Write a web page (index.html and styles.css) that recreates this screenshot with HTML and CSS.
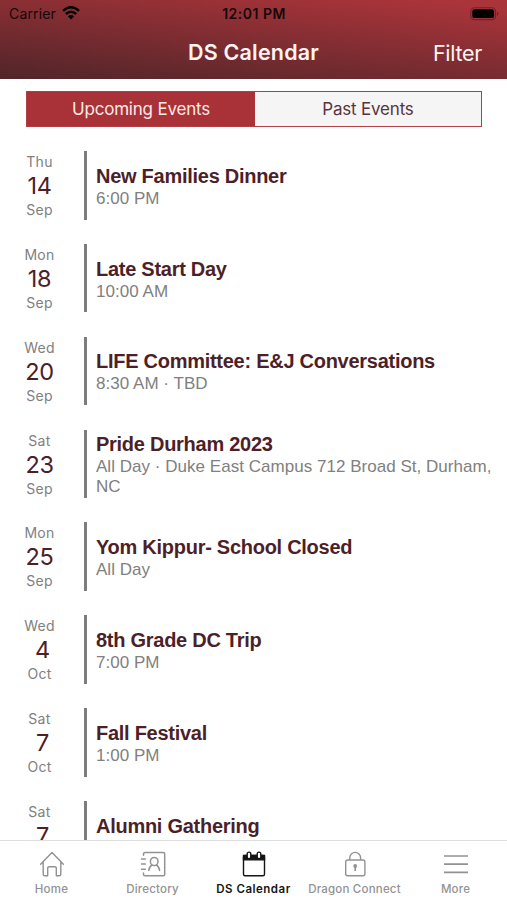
FILE: index.html
```html
<!DOCTYPE html>
<html lang="en">
<head>
<meta charset="utf-8">
<title>DS Calendar</title>
<link rel="stylesheet" href="styles.css">
</head>
<body>
<div class="app">
  <header class="header">
    <div class="status">
      <div class="carrier"><span>Carrier</span>
        <svg width="18" height="14" viewBox="0 0 18 14" fill="none" stroke="#000" stroke-width="2.4"><path d="M1 4.9Q9-2.3 17 4.9M3.8 8Q9 3.6 14.2 8"/><path d="M9 13.4 5.9 10.3Q9 7.8 12.1 10.3Z" fill="#000" stroke="none"/></svg>
      </div>
      <div class="clock">12:01 PM</div>
      <div class="battery"><svg width="29" height="14" viewBox="0 0 29 14"><rect x=".8" y=".8" width="24.8" height="11.8" rx="3.6" fill="none" stroke="#6b2529" stroke-width="1.1"/><rect x="2.3" y="2.3" width="21.8" height="8.8" rx="2.2"/><path d="M27 4.8q1.4.5 1.4 2T27 8.8Z" fill="#6b2529"/></svg></div>
    </div>
    <div class="nav"><h1 class="title">DS Calendar</h1><span class="filter">Filter</span></div>
  </header>
  <div class="segments"><div class="segment active">Upcoming Events</div><div class="segment past">Past Events</div></div>
  <main class="events">
    <article class="event"><div class="date"><span>Thu</span><b>14</b><span>Sep</span></div><div class="info"><h2>New Families Dinner</h2><p>6:00 PM</p></div></article>
    <article class="event"><div class="date"><span>Mon</span><b>18</b><span>Sep</span></div><div class="info"><h2>Late Start Day</h2><p>10:00 AM</p></div></article>
    <article class="event"><div class="date"><span>Wed</span><b>20</b><span>Sep</span></div><div class="info"><h2>LIFE Committee: E&amp;J Conversations</h2><p>8:30 AM · TBD</p></div></article>
    <article class="event"><div class="date"><span>Sat</span><b>23</b><span>Sep</span></div><div class="info"><h2>Pride Durham 2023</h2><p>All Day · Duke East Campus 712 Broad St, Durham,<br>NC</p></div></article>
    <article class="event"><div class="date"><span>Mon</span><b>25</b><span>Sep</span></div><div class="info"><h2>Yom Kippur- School Closed</h2><p>All Day</p></div></article>
    <article class="event"><div class="date"><span>Wed</span><b class="single">4</b><span>Oct</span></div><div class="info"><h2>8th Grade DC Trip</h2><p>7:00 PM</p></div></article>
    <article class="event"><div class="date"><span>Sat</span><b class="single">7</b><span>Oct</span></div><div class="info"><h2>Fall Festival</h2><p>1:00 PM</p></div></article>
    <article class="event"><div class="date"><span>Sat</span><b class="single">7</b></div><div class="info"><h2>Alumni Gathering</h2><p></p></div></article>
  </main>
  <nav class="tabs">
    <div class="tab"><svg width="26" height="26" viewBox="0 0 26 26" fill="none" stroke="currentColor" stroke-width="1.4" stroke-linejoin="round" stroke-linecap="round"><path d="M1.6 13.2 13 1.4l11.4 11.8M4.2 11v12.3q0 1.5 1.5 1.5h3V17q0-1.3 1.3-1.3h6q1.3 0 1.3 1.3v7.8h3q1.5 0 1.5-1.5V11"/></svg><span>Home</span></div>
    <div class="tab"><svg width="26" height="26" viewBox="0 0 26 26" fill="none" stroke="currentColor" stroke-width="1.5" stroke-linecap="round"><path d="M3.5 4.2V3q0-1.6 1.6-1.6h18q1.6 0 1.6 1.6v20.2q0 1.6-1.6 1.6h-18q-1.6 0-1.6-1.6V22M1.5 8h3.8M1.5 13.1h3.8M1.5 18.2h3.8"/><ellipse cx="14.2" cy="10.5" rx="3.8" ry="4.1"/><path d="M8.8 19.4q.7-4.2 3.2-5.4m4.4 0q2.5 1.2 3.2 5.4"/></svg><span>Directory</span></div>
    <div class="tab current"><svg width="26" height="26" viewBox="0 0 26 26" fill="none" stroke="currentColor" stroke-width="1.4"><rect x="2.5" y="4.5" width="21" height="20.3" rx="1.5"/><path d="M2.5 4.5h21v4.4h-21z" fill="currentColor"/><rect x="6.2" y="1.1" width="3.6" height="6.6" rx="1.8" fill="#fff"/><rect x="16.2" y="1.1" width="3.6" height="6.6" rx="1.8" fill="#fff"/></svg><span>DS Calendar</span></div>
    <div class="tab"><svg width="26" height="26" viewBox="0 0 26 26" fill="none" stroke="currentColor" stroke-width="1.4"><rect x="3.7" y="9" width="19.2" height="15.8" rx="2"/><path d="M7.8 9V6.8a5.4 5.4 0 0 1 10.8 0V9"/><circle cx="13.2" cy="15" r="1.9" fill="currentColor" stroke="none"/><path d="M13.2 15v5" stroke-width="1.6"/></svg><span>Dragon Connect</span></div>
    <div class="tab"><svg width="26" height="26" viewBox="0 0 26 26" fill="none" stroke="currentColor" stroke-width="1.7"><path d="M1 5h24M1 13.1h24M1 21.3h24"/></svg><span>More</span></div>
  </nav>
</div>
</body>
</html>
```
FILE: styles.css
```css
* { box-sizing: border-box; }
body { margin: 0; background: #fff; font-family: Inter, sans-serif; }
.app { width: 507px; height: 900px; overflow: hidden; display: flex; flex-direction: column; }
.header { height: 79px; flex: none; background: linear-gradient(186deg, #a9343a 8%, #502529 100%); }
.status { height: 27px; padding: 0 8px 0 9px; display: grid; grid-template-columns: 1fr auto 1fr; align-items: center; font-size: 14px; color: #160708; }
.carrier { display: flex; align-items: center; gap: 6px; letter-spacing: .15px; }
.carrier svg { margin-top: -2px; }
.clock { font-weight: 600; letter-spacing: .5px; }
.battery { display: flex; justify-content: flex-end; }
.nav { height: 52px; padding: 0 25px; display: grid; grid-template-columns: 1fr auto 1fr; align-items: center; color: #fff4f1; }
.title { grid-column: 2; margin: 0; padding-bottom: 2px; font-size: 21.5px; line-height: 48px; font-weight: 600; letter-spacing: .2px; }
.filter { text-align: right; font-size: 21.5px; line-height: 52px; letter-spacing: -.3px; }
.segments { flex: none; width: 456px; height: 36px; margin: 12px 0 0 26px; display: flex; border: 1px solid #b23d44; font-size: 17px; line-height: 34px; letter-spacing: -.2px; text-align: center; }
.segment { flex: 1; color: #5b343a; background: #f5f5f5; }
.active { flex: 0 0 228px; background: #a93138; color: #ffe9e5; }
.events { flex: 1; min-height: 0; overflow: hidden; padding-top: 24px; }
.event { display: flex; height: 68.5px; margin-bottom: 24.36px; }
.date { flex: none; width: 84px; padding-right: 5px; display: flex; flex-direction: column; align-items: center; color: #808080; font-size: 14px; line-height: 21px; letter-spacing: .3px; }
.date b { font-size: 23.5px; line-height: 27px; font-weight: 400; letter-spacing: -.3px; color: #4d2028; }
.date .single { margin-left: 6px; }
.info { flex: 1; border-left: 3px solid #7d7d7d; padding: 1px 0 0 9px; display: flex; flex-direction: column; justify-content: center; font-family: "Liberation Sans", sans-serif; white-space: nowrap; }
.info h2 { margin: 0; font-size: 20px; line-height: 24px; letter-spacing: -.27px; color: #4d1f28; }
.info p { margin: 0; min-height: 20px; font-size: 17px; line-height: 20px; letter-spacing: .03px; color: #808080; position: relative; top: 1px; }
.tabs { flex: none; height: 60px; border-top: 1px solid #dedede; padding-left: 1px; display: grid; grid-template-columns: repeat(5, 101px); background: #fff; }
.tab { display: flex; flex-direction: column; align-items: center; padding-top: 10px; color: #929292; font-size: 11.5px; line-height: 14px; font-weight: 500; letter-spacing: .2px; white-space: nowrap; }
.tab svg { display: block; margin-bottom: 5px; }
.current { color: #151515; font-weight: 600; letter-spacing: .5px; }
```
